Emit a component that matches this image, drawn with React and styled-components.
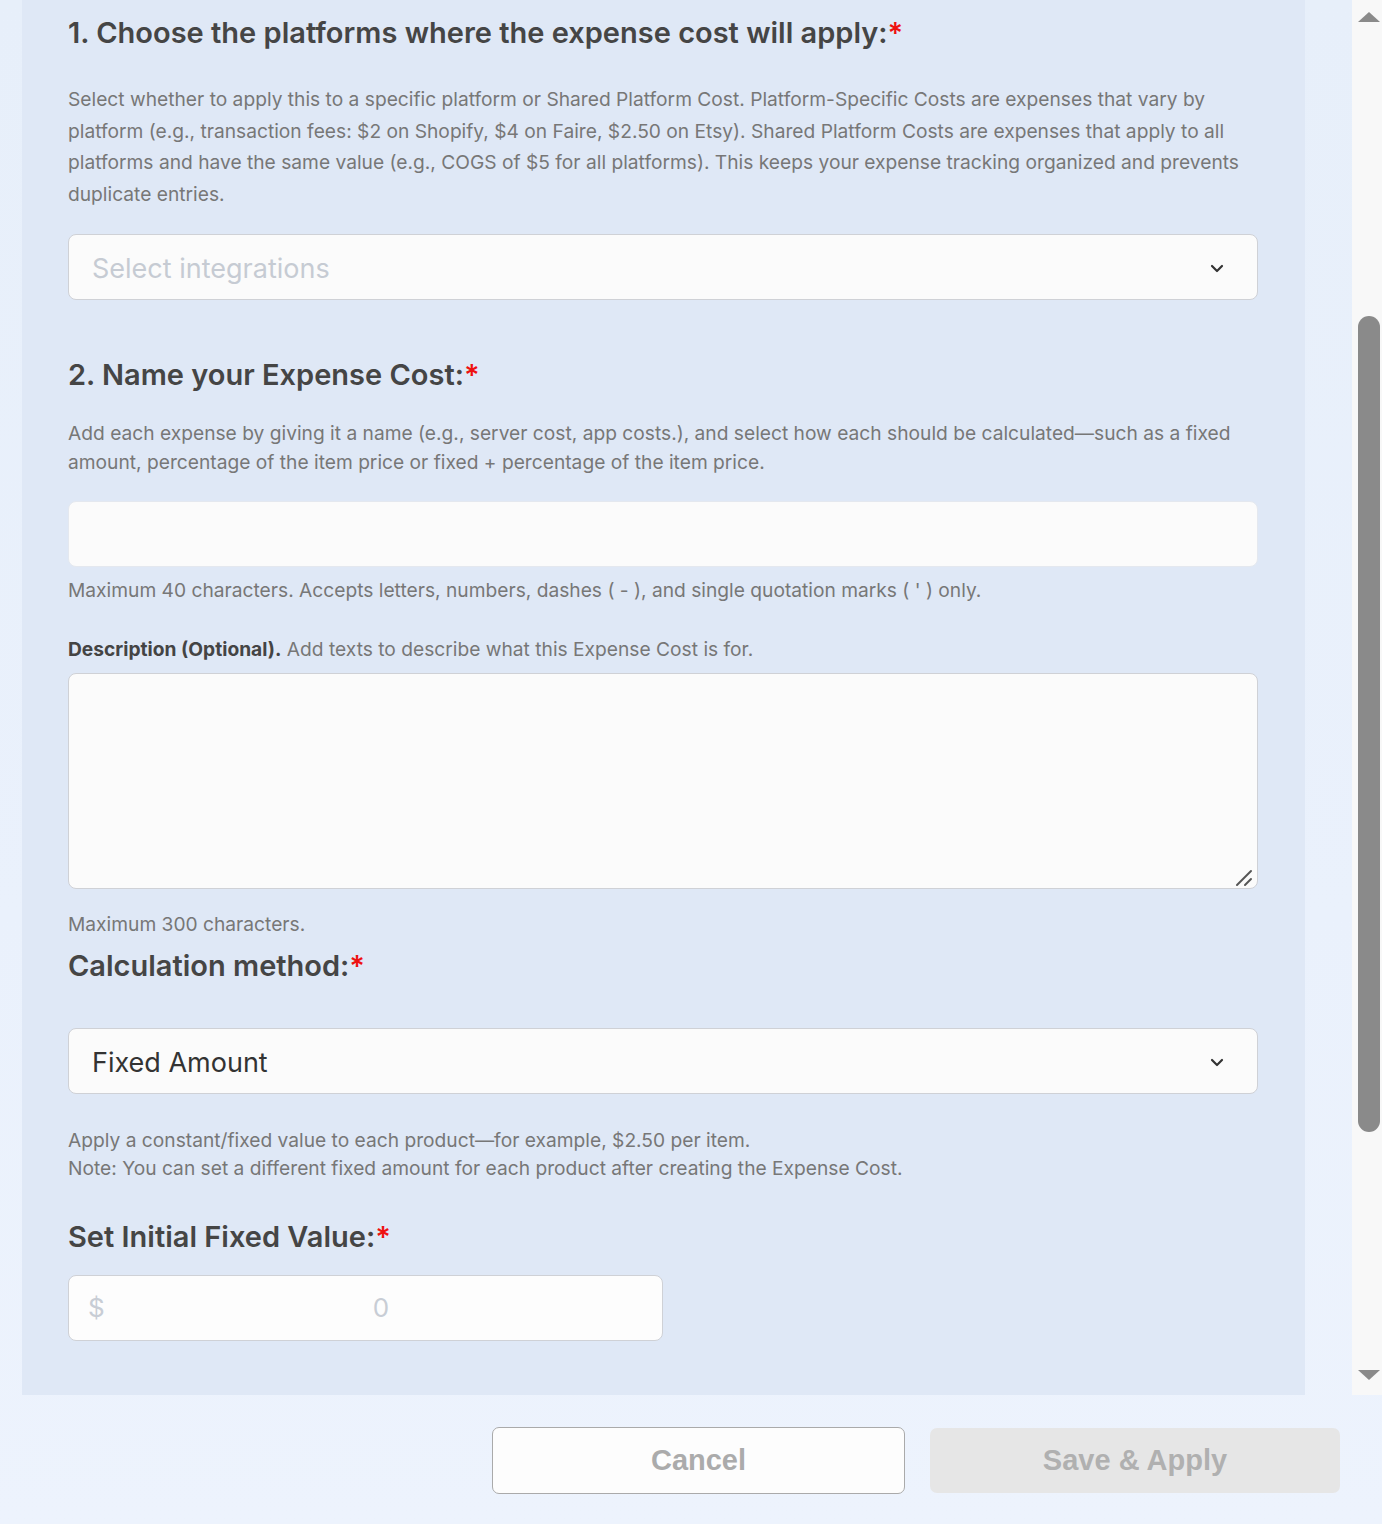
import React from 'react'
import styled, { createGlobalStyle } from 'styled-components'

const GlobalStyle = createGlobalStyle`
  html, body {
    margin: 0;
    padding: 0;
  }
  body {
    font-family: Inter, "Noto Sans", "Liberation Sans", sans-serif;
    background: linear-gradient(180deg, #e7effa 0%, #eaf1fc 60%, #edf3fd 100%);
    color: #444;
  }
`

function Chevron() {
  return (
    <svg width="14" height="9" viewBox="0 0 14 9" fill="none">
      <polyline points="2,2 7,7 12,2" stroke="#333" strokeWidth="2.2" strokeLinecap="round" strokeLinejoin="round" />
    </svg>
  )
}

function ResizeGrip() {
  return (
    <Grip width="18" height="18" viewBox="0 0 18 18" fill="none">
      <line x1="2" y1="16" x2="16" y2="2" stroke="#555" strokeWidth="2" strokeLinecap="round" />
      <line x1="10" y1="16" x2="16" y2="10" stroke="#555" strokeWidth="2" strokeLinecap="round" />
    </Grip>
  )
}

function App() {
  return (
    <Page>
      <GlobalStyle />
      <Top>
        <Panel>
          <Heading>1. Choose the platforms where the expense cost will apply:<Req>*</Req></Heading>
          <Para $mt={34} $lh={31.7}>
            Select whether to apply this to a specific platform or Shared Platform Cost. Platform-Specific Costs are expenses that vary by
            platform (e.g., transaction fees: $2 on Shopify, $4 on Faire, $2.50 on Etsy). Shared Platform Costs are expenses that apply to all
            platforms and have the same value (e.g., COGS of $5 for all platforms). This keeps your expense tracking organized and prevents
            duplicate entries.
          </Para>
          <SelectBox $mt={23}>
            <SelectText $placeholder>Select integrations</SelectText>
            <Chevron />
          </SelectBox>

          <Heading $mt={58}>2. Name your Expense Cost:<Req>*</Req></Heading>
          <Para $mt={27} $lh={29}>
            Add each expense by giving it a name (e.g., server cost, app costs.), and select how each should be calculated—such as a fixed
            amount, percentage of the item price or fixed + percentage of the item price.
          </Para>
          <NameInput type="text" />
          <Helper $mt={11}>Maximum 40 characters. Accepts letters, numbers, dashes ( - ), and single quotation marks ( ' ) only.</Helper>
          <Helper $mt={35}><Strong>Description (Optional).</Strong> Add texts to describe what this Expense Cost is for.</Helper>
          <AreaWrap>
            <TextArea />
            <ResizeGrip />
          </AreaWrap>
          <Helper $mt={23}>Maximum 300 characters.</Helper>

          <Heading $mt={13}>Calculation method:<Req>*</Req></Heading>
          <SelectBox $mt={45}>
            <SelectText>Fixed Amount</SelectText>
            <Chevron />
          </SelectBox>
          <Para $mt={32} $lh={28}>
            Apply a constant/fixed value to each product—for example, $2.50 per item.<br />
            Note: You can set a different fixed amount for each product after creating the Expense Cost.
          </Para>

          <Heading $mt={38}>Set Initial Fixed Value:<Req>*</Req></Heading>
          <MoneyBox>
            <Currency>$</Currency>
            <MoneyInput type="text" placeholder="0" />
          </MoneyBox>
        </Panel>
        <Track>
          <ArrowUp />
          <Thumb />
          <ArrowDown />
        </Track>
      </Top>
      <Footer>
        <CancelButton>Cancel</CancelButton>
        <SaveButton disabled>Save &amp; Apply</SaveButton>
      </Footer>
    </Page>
  )
}

export default App

const Page = styled.div`
  width: 1382px;
  height: 1524px;
  overflow: hidden;
`

const Top = styled.div`
  display: flex;
  height: 1395px;
  padding-left: 22px;
`

const Panel = styled.div`
  width: 1283px;
  box-sizing: border-box;
  padding: 16px 47px 54px 46px;
  background: #dfe8f6;
  margin-right: 47px;
`

const Heading = styled.div`
  margin-top: ${p => p.$mt || 0}px;
  font-size: 29px;
  line-height: 34px;
  font-weight: 600;
  color: #454545;
`

const Req = styled.span`
  color: #ee1111;
`

const Para = styled.div`
  margin-top: ${p => p.$mt || 0}px;
  font-size: 19.2px;
  line-height: ${p => p.$lh || 28}px;
  color: #777;
`

const Helper = styled.div`
  margin-top: ${p => p.$mt || 0}px;
  font-size: 19.2px;
  line-height: 24px;
  color: #777;
`

const Strong = styled.span`
  font-weight: 700;
  color: #444;
`

const SelectBox = styled.div`
  margin-top: ${p => p.$mt || 0}px;
  height: 66px;
  box-sizing: border-box;
  border: 1px solid #cfd1d6;
  border-radius: 8px;
  background: #fbfbfb;
  display: flex;
  align-items: center;
  justify-content: space-between;
  padding: 3px 33px 0 23px;
`

const SelectText = styled.span`
  font-size: 27px;
  color: ${p => (p.$placeholder ? '#c6cbd3' : '#333')};
`

const NameInput = styled.input`
  display: block;
  width: 100%;
  margin-top: 24px;
  height: 66px;
  box-sizing: border-box;
  border: 1px solid #e4e8ef;
  border-radius: 8px;
  background: #fbfbfb;
  outline: none;
  font: inherit;
  font-size: 26px;
  padding: 0 23px;
`

const AreaWrap = styled.div`
  position: relative;
  margin-top: 12px;
`

const TextArea = styled.textarea`
  display: block;
  width: 100%;
  height: 216px;
  box-sizing: border-box;
  border: 1px solid #cfd1d6;
  border-radius: 8px;
  background: #fbfbfb;
  outline: none;
  font: inherit;
  font-size: 18px;
  padding: 12px 20px;
  resize: none;
`

const Grip = styled.svg`
  position: absolute;
  right: 5px;
  bottom: 2px;
`

const MoneyBox = styled.div`
  margin-top: 21px;
  width: 595px;
  height: 66px;
  box-sizing: border-box;
  border: 1px solid #cfd1d6;
  border-radius: 8px;
  background: #fdfdfd;
  display: flex;
  align-items: center;
  padding-left: 19px;
`

const Currency = styled.span`
  font-size: 26px;
  color: #c8cdd5;
  width: 12px;
`

const MoneyInput = styled.input`
  flex: 1;
  min-width: 0;
  border: none;
  background: transparent;
  outline: none;
  font: inherit;
  font-size: 26px;
  text-align: center;
  color: #333;
  &::placeholder {
    color: #c8cdd5;
  }
`

const Track = styled.div`
  width: 30px;
  background: #f8f8f8;
  display: flex;
  flex-direction: column;
  align-items: flex-end;
  padding-right: 2px;
  box-sizing: border-box;
`

const ArrowUp = styled.div`
  margin-top: 12px;
  width: 0;
  height: 0;
  border-left: 11px solid transparent;
  border-right: 11px solid transparent;
  border-bottom: 10px solid #8a8a8a;
`

const Thumb = styled.div`
  margin-top: 294px;
  width: 22px;
  height: 816px;
  border-radius: 11px;
  background: #8a8a8a;
`

const ArrowDown = styled.div`
  margin-top: 238px;
  width: 0;
  height: 0;
  border-left: 11px solid transparent;
  border-right: 11px solid transparent;
  border-top: 10px solid #8a8a8a;
`

const Footer = styled.div`
  display: flex;
  justify-content: flex-end;
  align-items: flex-start;
  gap: 25px;
  padding: 32px 42px 0 0;
`

const CancelButton = styled.button`
  width: 413px;
  height: 67px;
  box-sizing: border-box;
  border: 1px solid #aaa;
  border-radius: 7px;
  background: #fdfdfd;
  color: #ababab;
  font-family: "Liberation Sans", Arial, sans-serif;
  font-weight: 700;
  font-size: 29px;
`

const SaveButton = styled.button`
  margin-top: 1px;
  width: 410px;
  height: 65px;
  border: none;
  border-radius: 7px;
  background: #e6e6e6;
  color: #b0b0b0;
  font-family: "Liberation Sans", Arial, sans-serif;
  font-weight: 700;
  font-size: 29px;
`
